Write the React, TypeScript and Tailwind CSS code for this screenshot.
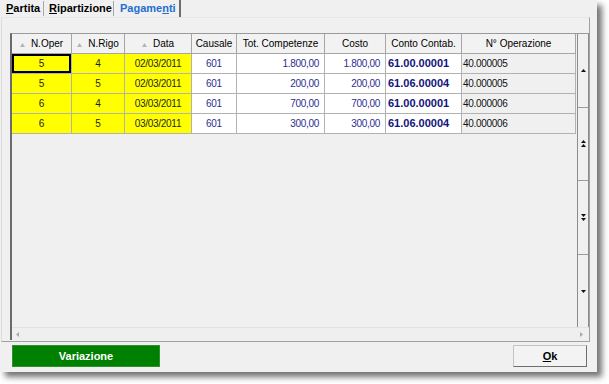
import React from 'react';

const rows = [
  ['5', '4', '02/03/2011', '601', '1.800,00', '1.800,00', '61.00.00001', '40.000005'],
  ['5', '5', '02/03/2011', '601', '200,00', '200,00', '61.06.00004', '40.000005'],
  ['6', '4', '03/03/2011', '601', '700,00', '700,00', '61.00.00001', '40.000006'],
  ['6', '5', '03/03/2011', '601', '300,00', '300,00', '61.06.00004', '40.000006'],
];

// width includes the 1px right grid line
const columns = [
  { label: 'N.Oper', w: 'w-[60px]', sort: true, cell: 'bg-[#ffff00] justify-center text-[#1c1c1c]' },
  { label: 'N.Rigo', w: 'w-[53px]', sort: true, cell: 'bg-[#ffff00] justify-center text-[#1c1c1c]' },
  { label: 'Data', w: 'w-[67px]', sort: true, cell: 'bg-[#ffff00] justify-center text-[#262626]' },
  { label: 'Causale', w: 'w-[45px]', sort: false, cell: 'bg-white justify-center text-[#2d2d8f]' },
  { label: 'Tot. Competenze', w: 'w-[88px]', sort: false, cell: 'bg-white justify-end pr-[5px] text-[#2d2d8f]' },
  { label: 'Costo', w: 'w-[61px]', sort: false, cell: 'bg-white justify-end pr-[5px] text-[#2d2d8f]' },
  { label: 'Conto Contab.', w: 'w-[76px]', sort: false, cell: 'bg-white pl-[2px] font-bold text-[11px] tracking-normal text-[#12127c]' },
  { label: 'N° Operazione', w: 'w-[114px]', sort: false, cell: 'bg-[#f0f0f0] pl-[1px] text-[#111]' },
];

const SortArrow = () => (
  <svg width="5" height="4" viewBox="0 0 5 4" className="mt-[2px]">
    <polygon points="2.5,0 5,4 0,4" fill="#b4b4b4" />
  </svg>
);

const Up = ({ y = 0 }: { y?: number }) => <polygon points={`2.5,${y} 5,${y + 3} 0,${y + 3}`} fill="#111" />;
const Down = ({ y = 0 }: { y?: number }) => <polygon points={`0,${y} 5,${y} 2.5,${y + 3}`} fill="#111" />;

const ScrollButton = ({ kind }: { kind: 'up' | 'pgup' | 'pgdn' | 'down' }) => (
  <div className="flex-1 flex items-center justify-center border-b border-[#9c9c9c] last:border-b-0 bg-[#f0f0f0]">
    <svg width="5" height="8" viewBox="0 0 5 8">
      {kind === 'up' && <Up y={3} />}
      {kind === 'pgup' && (
        <>
          <Up y={0} />
          <Up y={4} />
        </>
      )}
      {kind === 'pgdn' && (
        <>
          <Down y={1} />
          <Down y={5} />
        </>
      )}
      {kind === 'down' && <Down y={3} />}
    </svg>
  </div>
);

export default function App() {
  return (
    <div className="w-[609px] h-[384px] bg-white font-['Liberation_Sans',Arial,sans-serif] overflow-hidden">
      <div className="w-[597px] h-[372px] bg-[#f0f0f0] shadow-[5px_5px_6px_rgba(0,0,0,0.55)] flex flex-col">
        {/* Tabs */}
        <div className="h-[17px] flex text-[11px] font-bold leading-[17px] shrink-0">
          <div className="w-[44px] pl-[6px] border-r border-[#a8a8a8] my-[1px] leading-[15px] text-black">
            <span className="underline underline-offset-1">P</span>artita
          </div>
          <div className="w-[70px] pl-[5px] border-r border-[#a8a8a8] my-[1px] leading-[15px] text-black">
            <span className="underline underline-offset-1">R</span>ipartizione
          </div>
          <div className="w-[67px] pl-[6px] border-r-2 border-[#6e6e6e] text-[#1f6fcf]">
            Pagame<span className="underline underline-offset-1">n</span>ti
          </div>
        </div>

        {/* Tab panel */}
        <div className="ml-[1px] w-[589px] h-[325px] shrink-0 border border-[#a0a0a0] border-l-[#dcdcdc] border-t-[#e6e6e6] pl-[8px] pt-[15px]">
          {/* Grid */}
          <div className="w-[579px] h-[307px] border-l-2 border-t border-[#6b6b6b] border-t-[#9a9a9a] flex flex-col">
            <div className="h-[293px] flex">
              {/* Table */}
              <div className="w-[565px] flex flex-col bg-[#f0f0f0]">
                <div className="h-[20px] flex text-[10px] text-black">
                  {columns.map((c) => (
                    <div
                      key={c.label}
                      className={`${c.w} flex items-center justify-center gap-[6px] border-r border-b border-[#a6a6a6] bg-[#f2f2f2]`}
                    >
                      {c.sort && <SortArrow />}
                      <span>{c.label}</span>
                    </div>
                  ))}
                </div>
                {rows.map((r, ri) => (
                  <div key={ri} className="h-[20px] flex text-[10px] tracking-[-0.3px]">
                    {r.map((v, ci) => (
                      <div
                        key={ci}
                        className={`${columns[ci].w} ${columns[ci].cell} flex items-center border-r border-b border-[#b2b2b2] ${
                          ri === 0 && ci === 0 ? 'shadow-[inset_0_0_0_2px_#000]' : ''
                        }`}
                      >
                        {v}
                      </div>
                    ))}
                  </div>
                ))}
              </div>
              {/* Vertical navigator */}
              <div className="w-[12px] flex flex-col border-l border-r border-[#8c8c8c]">
                <ScrollButton kind="up" />
                <ScrollButton kind="pgup" />
                <ScrollButton kind="pgdn" />
                <ScrollButton kind="down" />
              </div>
            </div>
            {/* Horizontal scrollbar */}
            <div className="h-[13px] flex items-center justify-between border-t border-[#e2e2e2] bg-[#efefef] pl-[4px] pr-[6px]">
              <svg width="3" height="5" viewBox="0 0 3 5">
                <polygon points="3,0 3,5 0,2.5" fill="#a8a8a8" />
              </svg>
              <svg width="3" height="5" viewBox="0 0 3 5">
                <polygon points="0,0 3,2.5 0,5" fill="#a8a8a8" />
              </svg>
            </div>
          </div>
        </div>

        {/* Buttons */}
        <div className="flex justify-between pl-[12px] pr-[10px] pt-[3px]">
          <button className="w-[148px] h-[22px] bg-[#008000] border border-[#2f8f2f] text-white text-[11px] font-bold">
            Variazione
          </button>
          <button className="w-[74px] h-[22px] bg-[#f3f3f3] border border-[#c4c4c4] border-r-[#6e6e6e] border-b-[#6e6e6e] text-black text-[11px] font-bold">
            <span className="underline underline-offset-1">O</span>k
          </button>
        </div>
      </div>
    </div>
  );
}
